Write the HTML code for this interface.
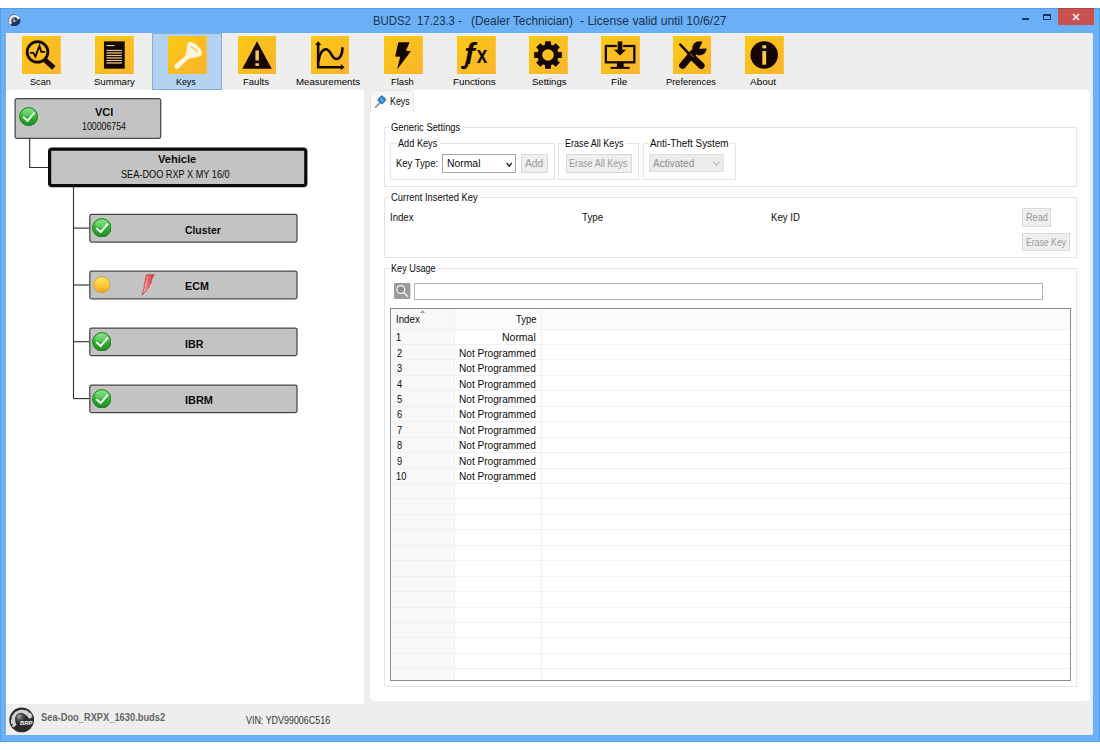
<!DOCTYPE html><html><head><meta charset="utf-8"><title>BUDS2</title><style>

html,body{margin:0;padding:0;background:#fff;}
body{width:1100px;height:750px;position:relative;overflow:hidden;font-family:"Liberation Sans", sans-serif;}
div{box-sizing:border-box;}
.a{position:absolute;}
.t{position:absolute;white-space:pre;transform-origin:0 0;}
.ic{position:absolute;display:block;}
.box{position:absolute;background:#c7c7c7;border:1.2px solid #3c3c3c;border-radius:3.5px;}
.ln{position:absolute;background:#2a2a2a;}
.fs{position:absolute;border:1px solid #e5e5e5;}
.lbg{position:absolute;background:#fff;height:12px;}
.btn{position:absolute;background:#efefef;border:1px solid #d9d9d9;}

</style></head><body>
<svg width="0" height="0" style="position:absolute"><defs><linearGradient id="yg" x1="0" y1="0" x2="1" y2="1"><stop offset="0" stop-color="#fac914"/><stop offset="1" stop-color="#fbb42c"/></linearGradient></defs></svg>
<div class="a" style="left:0;top:8px;width:1100px;height:733.8px;background:#69b0f6;box-shadow:inset 0 0 0 1px #5a9de0;"></div>
<div class="a" style="left:6px;top:33px;width:1087px;height:702px;background:#eeeeee;"></div>
<div class="a" style="left:1091.6px;top:33px;width:1.6px;height:702px;background:#dbe8f6;"></div>
<div class="a" style="left:1058px;top:8px;width:35.8px;height:16.8px;background:#c9514f;border-top:1px solid #a8484c;"></div>
<svg class="a" style="left:1072px;top:13px" width="8" height="8" viewBox="0 0 8 8"><path d="M1 1 L7 7 M7 1 L1 7" stroke="#fff" stroke-width="1.45"/></svg>
<div class="a" style="left:1022px;top:18.4px;width:7px;height:2px;background:#17345c;"></div>
<div class="a" style="left:1042.6px;top:14px;width:8.6px;height:6.4px;border:1px solid #17345c;border-top-width:2px;"></div>
<svg class="a" style="left:8px;top:13.8px" width="12.8" height="12.6" viewBox="0 0 26 26"><circle cx="13" cy="13" r="12.6" fill="#1f3658"/><path d="M6.4 20.4 A9.6 9.6 0 1 1 22.4 10.6" fill="none" stroke="#e4e6ea" stroke-width="5.6"/><circle cx="13.4" cy="11.6" r="5" fill="#7d8593"/><circle cx="16" cy="10.4" r="2.6" fill="#30343c"/><circle cx="12.6" cy="15" r="1.6" fill="#fff"/></svg>
<div class="a" style="left:152.2px;top:33.4px;width:69.6px;height:56.2px;background:#b4d3f3;border:1px solid #86aedd;"></div>
<svg class="ic" style="left:22px;top:35.9px" width="38.8" height="38.6" viewBox="0 0 39 39" preserveAspectRatio="none"><rect width="39" height="39" fill="url(#yg)"/><circle cx="15.6" cy="16.1" r="10.4" fill="none" stroke="#160600" stroke-width="2.8"/><path d="M23.2 24.3 L32 32.2" stroke="#160600" stroke-width="5" stroke-linecap="butt"/><path d="M8 17 L11.4 17 L13.5 20.7 L17.5 10 L19.4 16.1 L23.3 16.1" fill="none" stroke="#160600" stroke-width="1.9" stroke-linejoin="miter"/></svg>
<svg class="ic" style="left:95px;top:35.9px" width="38.8" height="38.6" viewBox="0 0 39 39" preserveAspectRatio="none"><rect width="39" height="39" fill="url(#yg)"/><rect x="9" y="5.4" width="20.9" height="27.6" fill="#160600"/><rect x="11.5" y="9.1" width="8" height="1.1" fill="#e8d8a8"/><rect x="11.5" y="14.00" width="15.5" height="1.00" fill="#f0dfb0"/><rect x="11.5" y="16.05" width="15.5" height="1.90" fill="#b58f4a"/><rect x="11.5" y="19.10" width="15.5" height="1.00" fill="#f0dfb0"/><rect x="11.5" y="21.15" width="15.5" height="1.90" fill="#b58f4a"/><rect x="11.5" y="24.20" width="15.5" height="1.00" fill="#f0dfb0"/><rect x="11.5" y="26.25" width="15.5" height="1.90" fill="#b58f4a"/></svg>
<svg class="ic" style="left:168px;top:35.9px" width="38.8" height="38.6" viewBox="0 0 39 39" preserveAspectRatio="none"><rect width="39" height="39" fill="url(#yg)"/><path d="M19.3 9.2 Q19.8 5.6 23.6 6 Q25.6 6.4 30 10.4 Q33.8 14 34.1 16.8 Q34.3 19.6 31 20.6 Q26 22.2 22.4 22.5 Q20.4 22.9 19 24.4 L11.2 32.4 Q8.8 34.4 7 32.4 Q5.6 30 7.8 28.4 L16 21.4 Q18.4 19 18.4 15.6 Z" fill="#fff5df"/><path d="M23.4 10.6 L30 16.4" stroke="#f2c040" stroke-width="1.1"/></svg>
<svg class="ic" style="left:237.5px;top:35.9px" width="38.8" height="38.6" viewBox="0 0 39 39" preserveAspectRatio="none"><rect width="39" height="39" fill="url(#yg)"/><path d="M19.1 5.4 L33.9 33 L4.3 33 Z" fill="#160600"/><rect x="17.5" y="14.6" width="3.5" height="10.1" fill="#f3c868"/><rect x="17.5" y="27.5" width="3.5" height="2.8" fill="#f3c868"/></svg>
<svg class="ic" style="left:310.7px;top:35.9px" width="38.8" height="38.6" viewBox="0 0 39 39" preserveAspectRatio="none"><rect width="39" height="39" fill="url(#yg)"/><g fill="none" stroke="#160600" stroke-width="2.6" stroke-linejoin="miter"><path d="M7.2 8 L7.2 31.5 L31 31.5"/><path d="M7.6 25 C8.5 18 11.5 13.4 15 13.4 C20 13.4 20.5 23.2 25.5 23.2 C29.5 23.2 31.6 18 31.6 12.5" stroke-linecap="round"/></g><path d="M7.2 5.4 L10.4 9.2 L4 9.2 Z" fill="#160600"/><path d="M33.8 31.5 L30 34.7 L30 28.3 Z" fill="#160600"/></svg>
<svg class="ic" style="left:384px;top:35.9px" width="38.8" height="38.6" viewBox="0 0 39 39" preserveAspectRatio="none"><rect width="39" height="39" fill="url(#yg)"/><path d="M14.4 6.3 L25.8 6.3 L22.1 14.9 L27.1 15.5 L13.2 33.9 L16.3 21 L11.2 20.7 Z" fill="#160600"/></svg>
<svg class="ic" style="left:457.1px;top:35.9px" width="38.8" height="38.6" viewBox="0 0 39 39" preserveAspectRatio="none"><rect width="39" height="39" fill="url(#yg)"/><text x="7.4" y="28.2" font-family="Liberation Sans, sans-serif" font-style="italic" font-weight="700" font-size="30" fill="#160600" textLength="10.6" lengthAdjust="spacingAndGlyphs">f</text><path d="M10.2 27.4 Q9.4 32.6 5.6 31.8" fill="none" stroke="#160600" stroke-width="3.2" stroke-linecap="round"/><text x="19.8" y="26.9" font-family="Liberation Sans, sans-serif" font-weight="700" font-size="24.6" fill="#160600" textLength="10.6" lengthAdjust="spacingAndGlyphs">x</text></svg>
<svg class="ic" style="left:529.3px;top:35.9px" width="38.8" height="38.6" viewBox="0 0 39 39" preserveAspectRatio="none"><rect width="39" height="39" fill="url(#yg)"/><g fill="#160600"><rect x="16.10" y="5.30" width="6" height="6" rx="0.5" transform="rotate(0 19.10 19.20)"/><rect x="16.10" y="5.30" width="6" height="6" rx="0.5" transform="rotate(45 19.10 19.20)"/><rect x="16.10" y="5.30" width="6" height="6" rx="0.5" transform="rotate(90 19.10 19.20)"/><rect x="16.10" y="5.30" width="6" height="6" rx="0.5" transform="rotate(135 19.10 19.20)"/><rect x="16.10" y="5.30" width="6" height="6" rx="0.5" transform="rotate(180 19.10 19.20)"/><rect x="16.10" y="5.30" width="6" height="6" rx="0.5" transform="rotate(225 19.10 19.20)"/><rect x="16.10" y="5.30" width="6" height="6" rx="0.5" transform="rotate(270 19.10 19.20)"/><rect x="16.10" y="5.30" width="6" height="6" rx="0.5" transform="rotate(315 19.10 19.20)"/></g><circle cx="19.1" cy="19.2" r="8.3" fill="none" stroke="#160600" stroke-width="4.9"/></svg>
<svg class="ic" style="left:601.2px;top:35.9px" width="38.8" height="38.6" viewBox="0 0 39 39" preserveAspectRatio="none"><rect width="39" height="39" fill="url(#yg)"/><rect x="4.9" y="10.1" width="28.6" height="16.5" fill="none" stroke="#160600" stroke-width="2.3"/><rect x="16" y="27" width="6.8" height="4.6" fill="#160600"/><rect x="9.6" y="31.2" width="19.2" height="2" fill="#160600"/><path d="M16.4 5.1 L21.9 5.1 L21.9 13.4 L26.2 13.4 L19.1 20.1 L12.1 13.4 L16.4 13.4 Z" fill="#160600" stroke="url(#yg)" stroke-width="0.8"/></svg>
<svg class="ic" style="left:672.5px;top:35.9px" width="38.8" height="38.6" viewBox="0 0 39 39" preserveAspectRatio="none"><rect width="39" height="39" fill="url(#yg)"/><g stroke="#160600" fill="none"><path d="M9.6 29.8 L20.4 16.9" stroke-width="6.8" stroke-linecap="round"/><path d="M7.4 8.6 L18 20" stroke-width="2.6" stroke-linecap="round"/><path d="M19.8 21.6 L28.4 29.9" stroke-width="6.8" stroke-linecap="round"/></g><circle cx="26.6" cy="12.4" r="7.2" fill="#160600"/><path d="M27.2 12 L33.5 5 L36 11 Z" fill="url(#yg)"/><path d="M26.2 13 L30 5.2 L36.5 8 L34 12.6 Z" fill="url(#yg)"/><path d="M17.2 17.8 L21 21.4" stroke="#f7c24a" stroke-width="0.6"/></svg>
<svg class="ic" style="left:744.9px;top:35.9px" width="38.8" height="38.6" viewBox="0 0 39 39" preserveAspectRatio="none"><rect width="39" height="39" fill="url(#yg)"/><circle cx="19.3" cy="19.2" r="13.8" fill="#160600"/><rect x="17.4" y="9.4" width="3.9" height="3.1" fill="#f6cb52"/><rect x="17.4" y="15.2" width="3.9" height="13.8" fill="#f6cb52"/></svg>
<div class="a" style="left:6px;top:89.6px;width:358.4px;height:614.8px;background:#fff;"></div>
<div class="a" style="left:370px;top:90px;width:720px;height:611px;background:#fff;border-radius:5px;"></div>
<div class="a" style="left:370px;top:90px;width:44.4px;height:22px;background:linear-gradient(#f5f5f5,#fdfdfd 70%,#fff);border:1px solid #e4e4e4;border-bottom:none;border-radius:5px 5px 0 0;"></div>
<svg class="a" style="left:373.6px;top:95px" width="14" height="14" viewBox="0 0 14 14"><path d="M1.6 12.2 L6.2 7.6" stroke="#8b929c" stroke-width="1.7" stroke-linecap="round"/><rect x="4.6" y="1.6" width="6.4" height="6.4" rx="1.2" transform="rotate(40 7.8 4.8)" fill="#2f86c4" stroke="#1f5f94" stroke-width="0.6"/><path d="M6.6 3.6 L9 6" stroke="#7fd0f4" stroke-width="1.2"/></svg>
<svg class="a" style="left:0;top:90px" width="364" height="340" viewBox="0 90 364 340"><g fill="none" stroke="#2e2e2e" stroke-width="1.1"><path d="M29.7 138 L29.7 167.5 L48 167.5"/><path d="M73.5 186 L73.5 398.6"/><path d="M73.5 228.1 L89.5 228.1"/><path d="M73.5 285.0 L89.5 285.0"/><path d="M73.5 341.7 L89.5 341.7"/><path d="M73.5 398.6 L89.5 398.6"/></g><rect x="15.1" y="98.5" width="145.6" height="39.8" rx="2" fill="#c3c3c3" stroke="#474747" stroke-width="1.25"/><rect x="49.6" y="149.2" width="256.2" height="36.4" rx="2.4" fill="#c3c3c3" stroke="#0a0a0a" stroke-width="3.2"/><rect x="89.8" y="214.4" width="207.2" height="27.6" rx="1.8" fill="#c3c3c3" stroke="#474747" stroke-width="1.25"/><rect x="89.8" y="271.2" width="207.2" height="27.6" rx="1.8" fill="#c3c3c3" stroke="#474747" stroke-width="1.25"/><rect x="89.8" y="328.0" width="207.2" height="27.6" rx="1.8" fill="#c3c3c3" stroke="#474747" stroke-width="1.25"/><rect x="89.8" y="385.0" width="207.2" height="27.6" rx="1.8" fill="#c3c3c3" stroke="#474747" stroke-width="1.25"/></svg>
<div class="a" style="left:18.9px;top:106.8px;"><svg width="19.2" height="19.2" viewBox="0 0 20 20"><defs><linearGradient id="gg" x1="0" y1="0" x2="0" y2="1"><stop offset="0" stop-color="#7be27a"/><stop offset="0.5" stop-color="#33b033"/><stop offset="1" stop-color="#1d8a20"/></linearGradient></defs><circle cx="10" cy="10" r="9.4" fill="url(#gg)" stroke="#1c7a1e" stroke-width="1"/><ellipse cx="10" cy="6" rx="6.5" ry="4" fill="#9af09a" opacity="0.35"/><path d="M4.3 10.2 L8.9 14.4 L16.2 5.8" fill="none" stroke="#f4fff2" stroke-width="2.1"/></svg></div>
<div class="a" style="left:91.8px;top:217.7px;"><svg width="19.6" height="19.6" viewBox="0 0 20 20"><defs><linearGradient id="gg" x1="0" y1="0" x2="0" y2="1"><stop offset="0" stop-color="#7be27a"/><stop offset="0.5" stop-color="#33b033"/><stop offset="1" stop-color="#1d8a20"/></linearGradient></defs><circle cx="10" cy="10" r="9.4" fill="url(#gg)" stroke="#1c7a1e" stroke-width="1"/><ellipse cx="10" cy="6" rx="6.5" ry="4" fill="#9af09a" opacity="0.35"/><path d="M4.3 10.2 L8.9 14.4 L16.2 5.8" fill="none" stroke="#f4fff2" stroke-width="2.1"/></svg></div>
<div class="a" style="left:91.8px;top:331.8px;"><svg width="19.6" height="19.6" viewBox="0 0 20 20"><defs><linearGradient id="gg" x1="0" y1="0" x2="0" y2="1"><stop offset="0" stop-color="#7be27a"/><stop offset="0.5" stop-color="#33b033"/><stop offset="1" stop-color="#1d8a20"/></linearGradient></defs><circle cx="10" cy="10" r="9.4" fill="url(#gg)" stroke="#1c7a1e" stroke-width="1"/><ellipse cx="10" cy="6" rx="6.5" ry="4" fill="#9af09a" opacity="0.35"/><path d="M4.3 10.2 L8.9 14.4 L16.2 5.8" fill="none" stroke="#f4fff2" stroke-width="2.1"/></svg></div>
<div class="a" style="left:91.8px;top:388.5px;"><svg width="19.6" height="19.6" viewBox="0 0 20 20"><defs><linearGradient id="gg" x1="0" y1="0" x2="0" y2="1"><stop offset="0" stop-color="#7be27a"/><stop offset="0.5" stop-color="#33b033"/><stop offset="1" stop-color="#1d8a20"/></linearGradient></defs><circle cx="10" cy="10" r="9.4" fill="url(#gg)" stroke="#1c7a1e" stroke-width="1"/><ellipse cx="10" cy="6" rx="6.5" ry="4" fill="#9af09a" opacity="0.35"/><path d="M4.3 10.2 L8.9 14.4 L16.2 5.8" fill="none" stroke="#f4fff2" stroke-width="2.1"/></svg></div>
<div class="a" style="left:93.4px;top:275.8px;"><svg width="17.4" height="17.4" viewBox="0 0 20 20"><defs><linearGradient id="yy" x1="0" y1="0" x2="0" y2="1"><stop offset="0" stop-color="#ffe758"/><stop offset="0.55" stop-color="#fdc83a"/><stop offset="1" stop-color="#f6a01e"/></linearGradient></defs><circle cx="10" cy="10" r="9.3" fill="url(#yy)" stroke="#c9a22a" stroke-width="1.1"/></svg></div>
<div class="a" style="left:140.6px;top:273.8px;"><svg width="14" height="22" viewBox="0 0 14 22"><defs><linearGradient id="rr" x1="0" y1="0" x2="1" y2="0"><stop offset="0" stop-color="#ffd9d2"/><stop offset="0.55" stop-color="#f0606a"/><stop offset="1" stop-color="#d8303a"/></linearGradient></defs><path d="M5.6 0.8 L13 0.8 L9.6 7.4 L10.6 7.6 L7.4 12.8 L8.2 13 L1 21.2 L3.6 12.4 L2.8 12.2 L4.6 6.4 L4 6.2 Z" fill="url(#rr)" stroke="#c2343c" stroke-width="0.8"/></svg></div>
<div class="fs" style="left:384px;top:127px;width:693.4000000000001px;height:59.80000000000001px;"></div>
<div class="lbg" style="left:389.1px;top:122px;width:73.39999999999998px;"></div>
<div class="fs" style="left:390.2px;top:143.4px;width:164.40000000000003px;height:36.599999999999994px;"></div>
<div class="lbg" style="left:395.5px;top:138.4px;width:44px;"></div>
<div class="fs" style="left:558.4px;top:143.4px;width:80.39999999999998px;height:36.599999999999994px;"></div>
<div class="lbg" style="left:563.5px;top:138.4px;width:62.60000000000002px;"></div>
<div class="fs" style="left:643.2px;top:143.4px;width:92.59999999999991px;height:36.599999999999994px;"></div>
<div class="lbg" style="left:648.1px;top:138.4px;width:82.79999999999995px;"></div>
<div class="fs" style="left:384px;top:196.6px;width:693.4000000000001px;height:61.400000000000006px;"></div>
<div class="lbg" style="left:389.1px;top:191.6px;width:91.0px;"></div>
<div class="fs" style="left:384px;top:268.2px;width:693.4000000000001px;height:419.2px;"></div>
<div class="lbg" style="left:389.1px;top:263.2px;width:48.39999999999998px;"></div>
<div class="a" style="left:442px;top:154px;width:74.2px;height:18.8px;background:#fff;border:1px solid #a6a6a6;"></div>
<svg class="a" style="left:506.2px;top:161.6px" width="6.4" height="5.6" viewBox="0 0 7 6"><path d="M0.7 1 L3.5 4.6 L6.3 1" fill="none" stroke="#222" stroke-width="1.5"/></svg>
<div class="btn" style="left:521px;top:154.2px;width:26.6px;height:18.6px;"></div>
<div class="btn" style="left:565.6px;top:154px;width:66.6px;height:18.8px;"></div>
<div class="btn" style="left:649.4px;top:153.6px;width:74.4px;height:18.2px;background:#ececec;border-color:#e0e0e0;"></div>
<svg class="a" style="left:713.2px;top:160.6px" width="7" height="6" viewBox="0 0 7 6"><path d="M0.6 0.9 L3.5 4.4 L6.4 0.9" fill="none" stroke="#a8a8a8" stroke-width="1"/></svg>
<div class="btn" style="left:1022px;top:208.4px;width:29px;height:18.2px;"></div>
<div class="btn" style="left:1022px;top:233px;width:48.2px;height:18.2px;"></div>
<svg class="a" style="left:394.2px;top:282.8px" width="16.4" height="16" viewBox="0 0 16.4 16"><rect width="16.4" height="16" rx="1" fill="#9c9c9c"/><circle cx="6.8" cy="6.5" r="3.9" fill="#8e8e8e" stroke="#fff" stroke-width="1.1"/><path d="M9.6 9.4 L13.6 13.4" stroke="#fff" stroke-width="1.3" stroke-linecap="round"/></svg>
<div class="a" style="left:414.4px;top:283px;width:629px;height:16.8px;background:#fff;border:1px solid #b4b4b4;"></div>
<div class="a" style="left:390px;top:308.2px;width:680.5999999999999px;height:372.59999999999997px;background:#fff;border:1px solid #8c8c8c;overflow:hidden;">
<div class="a" style="left:0;top:0;width:63.4px;height:100%;background:#f8f8f8;"></div>
<div class="a" style="left:63.4px;top:0;width:100%;height:19.4px;background:#fbfbfb;"></div>
<div class="a" style="left:0;top:19.40px;width:100%;height:1px;background:#f0f0f0;"></div><div class="a" style="left:0;top:34.84px;width:100%;height:1px;background:#f0f0f0;"></div><div class="a" style="left:0;top:50.28px;width:100%;height:1px;background:#f0f0f0;"></div><div class="a" style="left:0;top:65.72px;width:100%;height:1px;background:#f0f0f0;"></div><div class="a" style="left:0;top:81.16px;width:100%;height:1px;background:#f0f0f0;"></div><div class="a" style="left:0;top:96.60px;width:100%;height:1px;background:#f0f0f0;"></div><div class="a" style="left:0;top:112.04px;width:100%;height:1px;background:#f0f0f0;"></div><div class="a" style="left:0;top:127.48px;width:100%;height:1px;background:#f0f0f0;"></div><div class="a" style="left:0;top:142.92px;width:100%;height:1px;background:#f0f0f0;"></div><div class="a" style="left:0;top:158.36px;width:100%;height:1px;background:#f0f0f0;"></div><div class="a" style="left:0;top:173.80px;width:100%;height:1px;background:#f0f0f0;"></div><div class="a" style="left:0;top:189.24px;width:100%;height:1px;background:#f0f0f0;"></div><div class="a" style="left:0;top:204.68px;width:100%;height:1px;background:#f0f0f0;"></div><div class="a" style="left:0;top:220.12px;width:100%;height:1px;background:#f0f0f0;"></div><div class="a" style="left:0;top:235.56px;width:100%;height:1px;background:#f0f0f0;"></div><div class="a" style="left:0;top:251.00px;width:100%;height:1px;background:#f0f0f0;"></div><div class="a" style="left:0;top:266.44px;width:100%;height:1px;background:#f0f0f0;"></div><div class="a" style="left:0;top:281.88px;width:100%;height:1px;background:#f0f0f0;"></div><div class="a" style="left:0;top:297.32px;width:100%;height:1px;background:#f0f0f0;"></div><div class="a" style="left:0;top:312.76px;width:100%;height:1px;background:#f0f0f0;"></div><div class="a" style="left:0;top:328.20px;width:100%;height:1px;background:#f0f0f0;"></div><div class="a" style="left:0;top:343.64px;width:100%;height:1px;background:#f0f0f0;"></div><div class="a" style="left:0;top:359.08px;width:100%;height:1px;background:#f0f0f0;"></div>
<div class="a" style="left:63.4px;top:0;width:1px;height:100%;background:#f0f0f0;"></div>
<div class="a" style="left:150.4px;top:0;width:1px;height:100%;background:#f0f0f0;"></div>
</div>
<svg class="a" style="left:420px;top:309.8px" width="5" height="3" viewBox="0 0 5 3"><path d="M0 3 L2.5 0.2 L5 3 Z" fill="#8d97a6"/></svg>
<svg class="a" style="left:9px;top:706.8px" width="25.4" height="25.8" viewBox="0 0 26 26"><defs><radialGradient id="bb" cx="0.35" cy="0.3" r="0.75"><stop offset="0" stop-color="#a8a8a8"/><stop offset="0.4" stop-color="#555"/><stop offset="1" stop-color="#1c1c1c"/></radialGradient></defs><circle cx="13" cy="13" r="12.7" fill="#2c2c2c"/><path d="M5.9 19.6 A9.4 9.4 0 1 1 22.5 11.2" fill="none" stroke="#d2d2d2" stroke-width="4.4"/><path d="M4.4 20.2 A11.3 11.3 0 1 1 24.2 11" fill="none" stroke="#2c2c2c" stroke-width="1.7" stroke-dasharray="1.5 4.7" stroke-dashoffset="-2"/><circle cx="12.2" cy="11.8" r="5.6" fill="url(#bb)" stroke="#2c2c2c" stroke-width="0.8"/><text x="11.4" y="18.7" font-family="Liberation Sans, sans-serif" font-size="5.2" font-weight="700" font-style="italic" fill="#fff" textLength="12.6" lengthAdjust="spacingAndGlyphs">BRP</text></svg>
<div class="t" id="title1" style="left:372.76px;top:13.00px;font-size:12.2px;line-height:16px;font-weight:400;color:#1b3050;transform:scaleX(0.9298);">BUDS2  17.23.3 -</div>
<div class="t" id="title2" style="left:471.27px;top:12.98px;font-size:12.2px;line-height:16px;font-weight:400;color:#1b3050;transform:scaleX(0.9724);">(Dealer Technician)</div>
<div class="t" id="title3" style="left:579.95px;top:12.98px;font-size:12.2px;line-height:16px;font-weight:400;color:#1b3050;transform:scaleX(0.9925);">- License valid until 10/6/27</div>
<div class="t" id="l1" style="left:29.84px;top:74.62px;font-size:9.9px;line-height:13px;font-weight:400;color:#000;transform:scaleX(0.9224);">Scan</div>
<div class="t" id="l2" style="left:93.52px;top:74.65px;font-size:9.9px;line-height:13px;font-weight:400;color:#000;transform:scaleX(0.9677);">Summary</div>
<div class="t" id="l3" style="left:176.33px;top:74.68px;font-size:9.9px;line-height:13px;font-weight:400;color:#000;transform:scaleX(0.8964);">Keys</div>
<div class="t" id="l4" style="left:242.73px;top:74.65px;font-size:9.9px;line-height:13px;font-weight:400;color:#000;transform:scaleX(0.9631);">Faults</div>
<div class="t" id="l5" style="left:296.26px;top:74.65px;font-size:9.9px;line-height:13px;font-weight:400;color:#000;transform:scaleX(0.9805);">Measurements</div>
<div class="t" id="l6" style="left:390.75px;top:74.65px;font-size:9.9px;line-height:13px;font-weight:400;color:#000;transform:scaleX(0.9407);">Flash</div>
<div class="t" id="l7" style="left:453.25px;top:74.64px;font-size:9.9px;line-height:13px;font-weight:400;color:#000;transform:scaleX(0.9964);">Functions</div>
<div class="t" id="l8" style="left:531.52px;top:74.66px;font-size:9.9px;line-height:13px;font-weight:400;color:#000;transform:scaleX(0.9669);">Settings</div>
<div class="t" id="l9" style="left:610.68px;top:74.61px;font-size:9.9px;line-height:13px;font-weight:400;color:#000;transform:scaleX(1.0207);">File</div>
<div class="t" id="l10" style="left:666.30px;top:74.63px;font-size:9.9px;line-height:13px;font-weight:400;color:#000;transform:scaleX(0.9378);">Preferences</div>
<div class="t" id="l11" style="left:750.00px;top:74.64px;font-size:9.9px;line-height:13px;font-weight:400;color:#000;transform:scaleX(1.0097);">About</div>
<div class="t" id="t1" style="left:95.44px;top:105.40px;font-size:10.5px;line-height:14px;font-weight:700;color:#0c0c0c;transform:scaleX(1.0388);">VCI</div>
<div class="t" id="t2" style="left:82.36px;top:120.34px;font-size:10.3px;line-height:13px;font-weight:400;color:#0c0c0c;transform:scaleX(0.8515);">100006754</div>
<div class="t" id="t3" style="left:157.74px;top:152.32px;font-size:10.7px;line-height:14px;font-weight:700;color:#0c0c0c;transform:scaleX(1.0372);">Vehicle</div>
<div class="t" id="t4" style="left:121.40px;top:168.46px;font-size:10.3px;line-height:13px;font-weight:400;color:#0c0c0c;transform:scaleX(0.8899);">SEA-DOO RXP X MY 16/0</div>
<div class="t" id="t5" style="left:185.39px;top:222.62px;font-size:10.5px;line-height:14px;font-weight:700;color:#0c0c0c;transform:scaleX(0.9874);">Cluster</div>
<div class="t" id="t6" style="left:184.87px;top:279.20px;font-size:10.5px;line-height:14px;font-weight:700;color:#0c0c0c;transform:scaleX(1.0207);">ECM</div>
<div class="t" id="t7" style="left:184.87px;top:336.94px;font-size:10.5px;line-height:14px;font-weight:700;color:#0c0c0c;transform:scaleX(1.0176);">IBR</div>
<div class="t" id="t8" style="left:184.85px;top:393.40px;font-size:10.5px;line-height:14px;font-weight:700;color:#0c0c0c;transform:scaleX(1.0416);">IBRM</div>
<div class="t" id="r0" style="left:389.64px;top:94.62px;font-size:10px;line-height:13px;font-weight:400;color:#0c0c0c;transform:scaleX(0.8857);">Keys</div>
<div class="t" id="r1" style="left:390.99px;top:120.57px;font-size:10px;line-height:13px;font-weight:400;color:#0c0c0c;transform:scaleX(0.9370);">Generic Settings</div>
<div class="t" id="r2" style="left:398.00px;top:136.56px;font-size:10px;line-height:13px;font-weight:400;color:#0c0c0c;transform:scaleX(0.9176);">Add Keys</div>
<div class="t" id="r3" style="left:396.29px;top:157.39px;font-size:10px;line-height:13px;font-weight:400;color:#0c0c0c;transform:scaleX(0.9497);">Key Type:</div>
<div class="t" id="r4" style="left:446.51px;top:156.53px;font-size:10px;line-height:13px;font-weight:400;color:#0c0c0c;transform:scaleX(1.0374);">Normal</div>
<div class="t" id="r5" style="left:525.44px;top:156.53px;font-size:10px;line-height:13px;font-weight:400;color:#9a9a9a;transform:scaleX(1.0235);">Add</div>
<div class="t" id="r6" style="left:565.32px;top:137.38px;font-size:10px;line-height:13px;font-weight:400;color:#0c0c0c;transform:scaleX(0.9071);">Erase All Keys</div>
<div class="t" id="r7" style="left:569.32px;top:157.38px;font-size:10px;line-height:13px;font-weight:400;color:#9a9a9a;transform:scaleX(0.9039);">Erase All Keys</div>
<div class="t" id="r8" style="left:650.45px;top:137.36px;font-size:10px;line-height:13px;font-weight:400;color:#0c0c0c;transform:scaleX(0.9879);">Anti-Theft System</div>
<div class="t" id="r9" style="left:653.00px;top:157.16px;font-size:10px;line-height:13px;font-weight:400;color:#8c8c8c;transform:scaleX(1.0025);">Activated</div>
<div class="t" id="r10" style="left:390.98px;top:190.58px;font-size:10px;line-height:13px;font-weight:400;color:#0c0c0c;transform:scaleX(0.9399);">Current Inserted Key</div>
<div class="t" id="r11" style="left:389.57px;top:211.39px;font-size:10px;line-height:13px;font-weight:400;color:#0c0c0c;transform:scaleX(0.9617);">Index</div>
<div class="t" id="r12" style="left:581.75px;top:211.38px;font-size:10px;line-height:13px;font-weight:400;color:#0c0c0c;transform:scaleX(0.9810);">Type</div>
<div class="t" id="r13" style="left:771.28px;top:210.99px;font-size:10px;line-height:13px;font-weight:400;color:#0c0c0c;transform:scaleX(0.9600);">Key ID</div>
<div class="t" id="r14" style="left:1025.61px;top:210.96px;font-size:10px;line-height:13px;font-weight:400;color:#9a9a9a;transform:scaleX(0.9156);">Read</div>
<div class="t" id="r15" style="left:1025.65px;top:236.27px;font-size:10px;line-height:13px;font-weight:400;color:#9a9a9a;transform:scaleX(0.8685);">Erase Key</div>
<div class="t" id="r16" style="left:390.77px;top:261.56px;font-size:10px;line-height:13px;font-weight:400;color:#0c0c0c;transform:scaleX(0.9137);">Key Usage</div>
<div class="t" id="h1" style="left:396.03px;top:313.18px;font-size:10px;line-height:13px;font-weight:400;color:#0c0c0c;transform:scaleX(0.9720);">Index</div>
<div class="t" id="h2" style="left:516.30px;top:313.18px;font-size:10px;line-height:13px;font-weight:400;color:#0c0c0c;transform:scaleX(0.9412);">Type</div>
<div class="t" id="s1" style="left:40.56px;top:709.66px;font-size:10.5px;line-height:14px;font-weight:700;color:#666;transform:scaleX(0.8862);">Sea-Doo_RXPX_1630.buds2</div>
<div class="t" id="s2" style="left:245.78px;top:714.20px;font-size:10px;line-height:13px;font-weight:400;color:#333;transform:scaleX(0.8917);">VIN: YDV99006C516</div>
<div class="t" id="n0" style="left:396.30px;top:331.16px;font-size:10px;line-height:13px;font-weight:400;color:#0c0c0c;transform:scaleX(0.9300);">1</div>
<div class="t" id="v0" style="left:501.80px;top:331.12px;font-size:10px;line-height:13px;font-weight:400;color:#0c0c0c;transform:scaleX(1.0472);">Normal</div>
<div class="t" id="n1" style="left:396.54px;top:347.04px;font-size:10px;line-height:13px;font-weight:400;color:#0c0c0c;transform:scaleX(0.9300);">2</div>
<div class="t" id="v1" style="left:458.69px;top:347.02px;font-size:10px;line-height:13px;font-weight:400;color:#0c0c0c;transform:scaleX(1.0087);">Not Programmed</div>
<div class="t" id="n2" style="left:396.54px;top:361.92px;font-size:10px;line-height:13px;font-weight:400;color:#0c0c0c;transform:scaleX(0.9300);">3</div>
<div class="t" id="v2" style="left:458.69px;top:361.90px;font-size:10px;line-height:13px;font-weight:400;color:#0c0c0c;transform:scaleX(1.0087);">Not Programmed</div>
<div class="t" id="n3" style="left:396.77px;top:377.80px;font-size:10px;line-height:13px;font-weight:400;color:#0c0c0c;transform:scaleX(0.9300);">4</div>
<div class="t" id="v3" style="left:458.69px;top:377.78px;font-size:10px;line-height:13px;font-weight:400;color:#0c0c0c;transform:scaleX(1.0087);">Not Programmed</div>
<div class="t" id="n4" style="left:396.54px;top:392.68px;font-size:10px;line-height:13px;font-weight:400;color:#0c0c0c;transform:scaleX(0.9300);">5</div>
<div class="t" id="v4" style="left:458.69px;top:392.66px;font-size:10px;line-height:13px;font-weight:400;color:#0c0c0c;transform:scaleX(1.0087);">Not Programmed</div>
<div class="t" id="n5" style="left:396.54px;top:407.99px;font-size:10px;line-height:13px;font-weight:400;color:#0c0c0c;transform:scaleX(0.9300);">6</div>
<div class="t" id="v5" style="left:458.69px;top:407.94px;font-size:10px;line-height:13px;font-weight:400;color:#0c0c0c;transform:scaleX(1.0087);">Not Programmed</div>
<div class="t" id="n6" style="left:396.54px;top:424.31px;font-size:10px;line-height:13px;font-weight:400;color:#0c0c0c;transform:scaleX(0.9300);">7</div>
<div class="t" id="v6" style="left:458.69px;top:424.26px;font-size:10px;line-height:13px;font-weight:400;color:#0c0c0c;transform:scaleX(1.0087);">Not Programmed</div>
<div class="t" id="n7" style="left:396.54px;top:439.32px;font-size:10px;line-height:13px;font-weight:400;color:#0c0c0c;transform:scaleX(0.9300);">8</div>
<div class="t" id="v7" style="left:458.69px;top:439.30px;font-size:10px;line-height:13px;font-weight:400;color:#0c0c0c;transform:scaleX(1.0087);">Not Programmed</div>
<div class="t" id="n8" style="left:396.54px;top:455.20px;font-size:10px;line-height:13px;font-weight:400;color:#0c0c0c;transform:scaleX(0.9300);">9</div>
<div class="t" id="v8" style="left:458.69px;top:455.18px;font-size:10px;line-height:13px;font-weight:400;color:#0c0c0c;transform:scaleX(1.0087);">Not Programmed</div>
<div class="t" id="n9" style="left:396.30px;top:470.08px;font-size:10px;line-height:13px;font-weight:400;color:#0c0c0c;transform:scaleX(0.9300);">10</div>
<div class="t" id="v9" style="left:458.69px;top:470.06px;font-size:10px;line-height:13px;font-weight:400;color:#0c0c0c;transform:scaleX(1.0087);">Not Programmed</div>
</body></html>
